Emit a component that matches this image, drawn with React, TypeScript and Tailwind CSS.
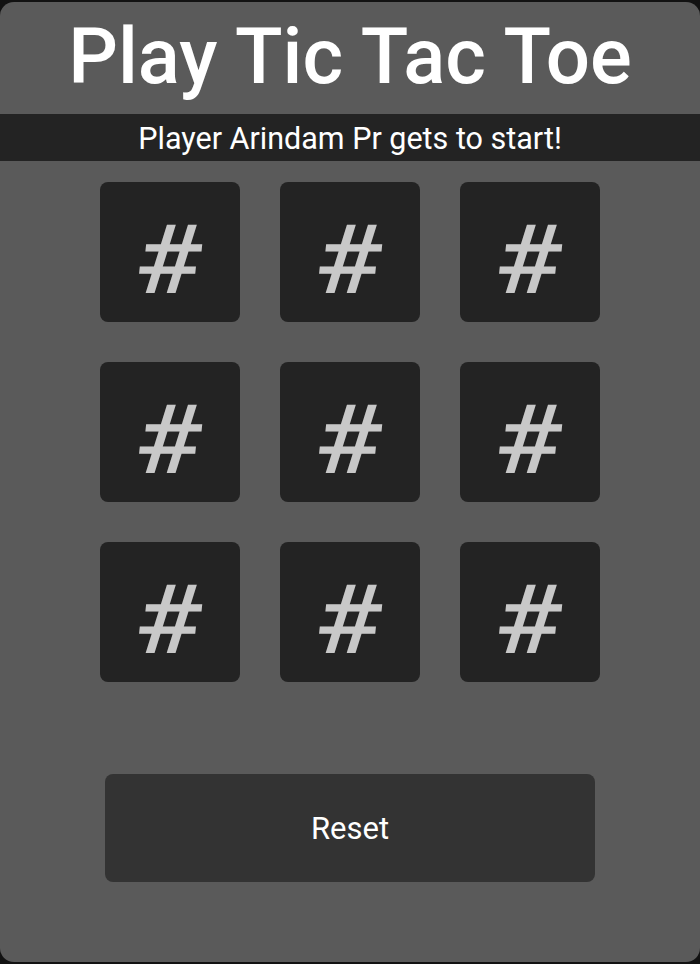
import { useState } from 'react';

export default function App() {
  const [cells] = useState<string[]>(Array(9).fill('#'));

  return (
    <div className="min-h-[964px] w-[700px] bg-[#121212] pt-[2px] font-['Roboto','Liberation_Sans',sans-serif]">
      <div className="flex h-[960px] w-[700px] flex-col items-center rounded-[14px] bg-[#5a5a5a]">
        {/* Title */}
        <h1 className="flex h-[112px] items-center justify-center pb-[2px] text-[78px] font-medium leading-none text-white">
          Play Tic Tac Toe
        </h1>

        {/* Status bar */}
        <div className="flex h-[47px] w-full items-center justify-center bg-[#232323] pt-[2px] text-[30.5px] text-white">
          Player Arindam Pr gets to start!
        </div>

        {/* Board */}
        <div className="mt-[21px] grid grid-cols-3 gap-[40px]">
          {cells.map((c, i) => (
            <div
              key={i}
              className="flex h-[140px] w-[140px] items-center justify-center rounded-[8px] bg-[#232323]"
            >
              <span className="inline-block -skew-x-[5deg] scale-x-[1.15] pt-[16px] text-[96px] font-medium leading-none text-[#c8c8c8]">
                {c}
              </span>
            </div>
          ))}
        </div>

        {/* Reset */}
        <button className="mt-[92px] h-[108px] w-[490px] rounded-[8px] bg-[#333333] pt-[2px] text-[31px] text-white">
          Reset
        </button>
      </div>
    </div>
  );
}
